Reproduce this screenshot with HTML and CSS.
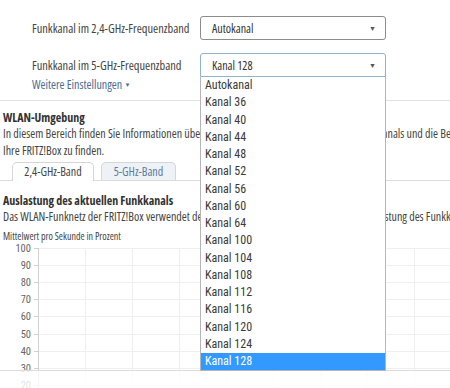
FILE: index.html
```html
<!DOCTYPE html>
<html lang="de">
<head>
    <meta charset="UTF-8">
    <title>WLAN Funkkanal</title>
    <link rel="stylesheet" href="styles.css">
</head>
<body>
    <div class="page">
        <div class="settings">
            <div class="row">
                <label class="label">Funkkanal im 2,4-GHz-Frequenzband</label>
                <div class="select">
                    <span>Autokanal</span>
                    <span class="caret">&#9660;</span>
                </div>
            </div>
            <div class="row">
                <label class="label">Funkkanal im 5-GHz-Frequenzband</label>
                <div class="select focused">
                    <span>Kanal 128</span>
                    <span class="caret">&#9660;</span>
                    <ul class="options">
                        <li>Autokanal</li>
                        <li>Kanal 36</li>
                        <li>Kanal 40</li>
                        <li>Kanal 44</li>
                        <li>Kanal 48</li>
                        <li>Kanal 52</li>
                        <li>Kanal 56</li>
                        <li>Kanal 60</li>
                        <li>Kanal 64</li>
                        <li>Kanal 100</li>
                        <li>Kanal 104</li>
                        <li>Kanal 108</li>
                        <li>Kanal 112</li>
                        <li>Kanal 116</li>
                        <li>Kanal 120</li>
                        <li>Kanal 124</li>
                        <li class="selected">Kanal 128</li>
                    </ul>
                </div>
            </div>
            <a class="more" href="#">Weitere Einstellungen <span class="small-caret">&#9660;</span></a>
        </div>

        <div class="section">
            <h4>WLAN-Umgebung</h4>
            <p>In diesem Bereich finden Sie Informationen über die genaue Auslastung des aktuellen Funkkanals und die Belegung der Funkkanäle in der Umgebung, um den besten Funkkanal für<br>Ihre FRITZ!Box zu finden.</p>

            <div class="tabs">
                <div class="tab active">2,4-GHz-Band</div>
                <div class="tab">5-GHz-Band</div>
            </div>

            <h4 class="sub">Auslastung des aktuellen Funkkanals</h4>
            <p>Das WLAN-Funknetz der FRITZ!Box verwendet derzeit den Kanal 128. Hier sehen Sie die Auslastung des Funkkanals.</p>
            <div class="caption">Mittelwert pro Sekunde in Prozent</div>

            <svg class="chart" width="640" height="150" viewBox="0 0 640 150">
                <g class="grid">
                    <line x1="38" y1="5.5" x2="640" y2="5.5"/>
                    <line x1="38" y1="22.5" x2="640" y2="22.5"/>
                    <line x1="38" y1="39.5" x2="640" y2="39.5"/>
                    <line x1="38" y1="56.5" x2="640" y2="56.5"/>
                    <line x1="38" y1="73.5" x2="640" y2="73.5"/>
                    <line x1="38" y1="91.5" x2="640" y2="91.5"/>
                    <line x1="38" y1="108.5" x2="640" y2="108.5"/>
                    <line x1="38" y1="125.5" x2="640" y2="125.5"/>
                    <line x1="38" y1="142.5" x2="640" y2="142.5"/>
                    <line x1="85.5" y1="5" x2="85.5" y2="150"/>
                    <line x1="132.5" y1="5" x2="132.5" y2="150"/>
                    <line x1="179.5" y1="5" x2="179.5" y2="150"/>
                    <line x1="226.5" y1="5" x2="226.5" y2="150"/>
                    <line x1="273.5" y1="5" x2="273.5" y2="150"/>
                    <line x1="320.5" y1="5" x2="320.5" y2="150"/>
                    <line x1="367.5" y1="5" x2="367.5" y2="150"/>
                    <line x1="414.5" y1="5" x2="414.5" y2="150"/>
                    <line x1="461.5" y1="5" x2="461.5" y2="150"/>
                </g>
                <line class="axis" x1="38.5" y1="5" x2="38.5" y2="150"/>
                <g class="ticks">
                    <line x1="34" y1="5.5" x2="38" y2="5.5"/>
                    <line x1="34" y1="22.5" x2="38" y2="22.5"/>
                    <line x1="34" y1="39.5" x2="38" y2="39.5"/>
                    <line x1="34" y1="56.5" x2="38" y2="56.5"/>
                    <line x1="34" y1="73.5" x2="38" y2="73.5"/>
                    <line x1="34" y1="91.5" x2="38" y2="91.5"/>
                    <line x1="34" y1="108.5" x2="38" y2="108.5"/>
                    <line x1="34" y1="125.5" x2="38" y2="125.5"/>
                    <line x1="34" y1="142.5" x2="38" y2="142.5"/>
                </g>
                <g class="labels">
                    <text x="31" y="9">100</text>
                    <text x="31" y="26">90</text>
                    <text x="31" y="43">80</text>
                    <text x="31" y="60">70</text>
                    <text x="31" y="77">60</text>
                    <text x="31" y="95">50</text>
                    <text x="31" y="112">40</text>
                    <text x="31" y="129">30</text>
                    <text x="31" y="146">20</text>
                </g>
            </svg>
        </div>
    </div>

    <div class="footer"></div>
</body>
</html>
```

FILE: styles.css
```css
body {
    margin: 0;
    overflow: hidden;
    font-family: "Open Sans", sans-serif;
    font-stretch: 75%;
    font-size: 12px;
    color: #444;
    background: white;
}
.page {
    width: 640px;
}
.settings {
    padding: 16px 0 8px 32px;
    display: flex;
    flex-direction: column;
    border-bottom: 1px solid #e2e2e2;
}
.row {
    display: flex;
    align-items: center;
    margin-bottom: 13px;
}
.row:last-of-type {
    margin-bottom: 1px;
}
.label {
    width: 168px;
    white-space: nowrap;
    font-size: 12.4px;
}
.select {
    position: relative;
    width: 186px;
    height: 24px;
    box-sizing: border-box;
    border: 1px solid #8c8c8c;
    border-radius: 3px;
    display: flex;
    align-items: center;
    justify-content: space-between;
    padding: 0 9px 0 11px;
    color: #333;
}
.select.focused {
    border-color: #8fb3c9;
    border-radius: 3px 3px 0 0;
}
.caret {
    font-size: 7px;
    color: #555;
    font-stretch: 100%;
}
.options {
    position: absolute;
    top: 23px;
    left: -1px;
    width: 186px;
    box-sizing: border-box;
    margin: 0;
    padding: 0;
    list-style: none;
    background: white;
    border: 1px solid #b5b5b5;
    border-top: none;
    z-index: 10;
    font-family: "Roboto Condensed", "Liberation Sans", sans-serif;
    font-stretch: 100%;
    font-size: 12px;
    color: #3a3a3a;
}
.options li {
    height: 17.25px;
    line-height: 17.25px;
    padding-left: 4px;
}
.options li.selected {
    background: #3399ff;
    color: white;
}
.more {
    line-height: 14px;
    color: #4a6d98;
    text-decoration: none;
    align-self: flex-start;
}
.small-caret {
    font-size: 6px;
    vertical-align: 2px;
    font-stretch: 100%;
}
.section {
    padding-left: 3px;
}
h4 {
    margin: 9px 0 0;
    font-size: 12px;
    color: #333;
    line-height: 16px;
}
p {
    margin: 0;
    line-height: 16.5px;
    color: #444;
    white-space: nowrap;
}
.tabs {
    display: flex;
    gap: 7px;
    padding-left: 12px;
    margin: 3px 0 0 -3px;
    border-bottom: 1px solid #dcdcdc;
    height: 18px;
}
.tab {
    height: 19px;
    box-sizing: border-box;
    border: 1px solid #d6d6d6;
    border-bottom: none;
    border-radius: 5px 5px 0 0;
    line-height: 17px;
    color: #444;
    background: white;
    width: 82px;
    text-align: center;
}
.tab:not(.active) {
    background: #eef1f5;
    color: #5b7ca3;
    width: 75px;
    height: 18px;
}
.sub {
    margin-top: 12px;
}
.caption {
    font-size: 10px;
    line-height: 14px;
    margin-top: 3px;
    color: #444;
}
.chart {
    display: block;
    margin-left: -3px;
}
.grid line {
    stroke: #efefef;
    stroke-width: 1;
}
.axis, .ticks line {
    stroke: #d0d0d0;
    stroke-width: 1;
}
.labels text {
    font-family: "Roboto Condensed", "Liberation Sans", sans-serif;
    font-size: 10.5px;
    fill: #666;
    text-anchor: end;
}
.footer {
    position: fixed;
    left: 0;
    right: 0;
    bottom: 0;
    height: 17px;
    background: rgba(255, 255, 255, 0.8);
    border-top: 1px solid #dcdcdc;
    z-index: 5;
}
```
